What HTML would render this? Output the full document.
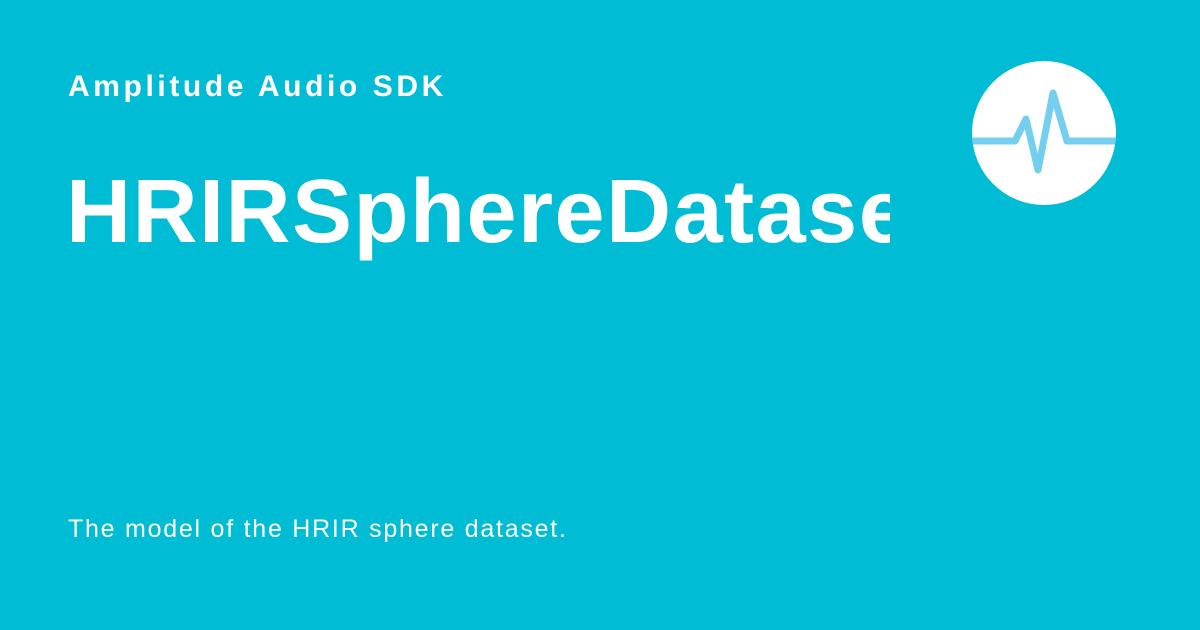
<!DOCTYPE html>
<html><head><style>
html,body{margin:0;padding:0}
body{width:1200px;height:630px;background:#00bcd4;position:relative;overflow:hidden;font-family:"Liberation Sans",sans-serif;color:#fff}
.a{position:absolute;left:68px;top:70px;font-size:30px;font-weight:bold;letter-spacing:3.6px}
.t{position:absolute;left:66px;top:162px;width:824px;overflow:hidden;white-space:nowrap;font-size:90px;font-weight:bold;letter-spacing:1.5px;line-height:100px}
.s{position:absolute;left:68px;top:515px;font-size:25px;letter-spacing:1.75px}
svg{position:absolute;left:0;top:0}
</style></head><body>
<div class="a">Amplitude Audio SDK</div>
<div class="t">HRIRSphereDataset</div>
<div class="s">The model of the HRIR sphere dataset.</div>
<svg width="1200" height="630">
<defs><clipPath id="c"><circle cx="1044" cy="133" r="72"/></clipPath></defs>
<circle cx="1044" cy="133" r="72" fill="#fff"/>
<path clip-path="url(#c)" d="M960 141 L1015 141 L1026 119 L1038 170 L1053 93 L1067 141 L1130 141" fill="none" stroke="#74cef0" stroke-width="7" stroke-linejoin="round" stroke-linecap="round"/>
</svg>
</body></html>
